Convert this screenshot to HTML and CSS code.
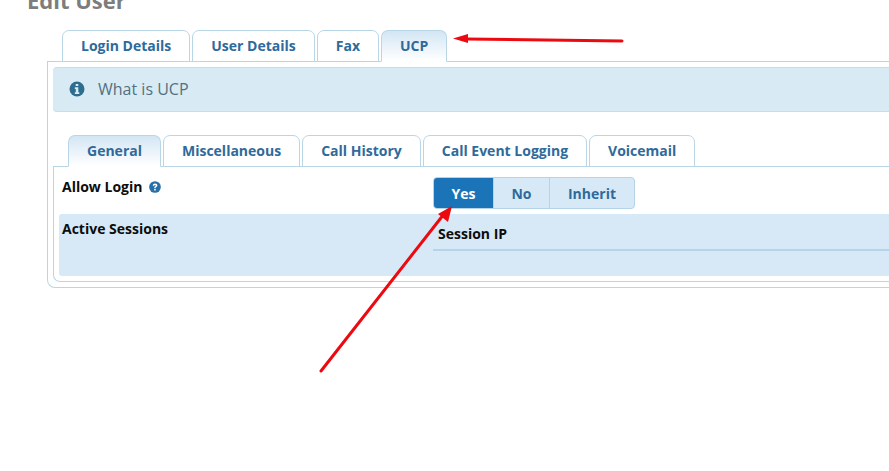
FILE: index.html
```html
<!DOCTYPE html>
<html lang="en">
<head>
<meta charset="utf-8">
<title>Edit User</title>
<link rel="stylesheet" href="styles.css">
</head>
<body>
<div class="page">
  <h1 class="title">Edit User</h1>
  <div class="outer">
    <ul class="tabs outer-tabs">
      <li class="tab">Login Details</li>
      <li class="tab">User Details</li>
      <li class="tab">Fax</li>
      <li class="tab active">UCP</li>
    </ul>
    <div class="panel outer-panel">
      <div class="alert">
        <svg class="icon-info" viewBox="0 0 16 16" aria-hidden="true"><circle cx="8" cy="8" r="7.5" fill="#2f6d8e"/><path d="M6.7 2.900h2.600v2.200H6.700zM5.800 6.200h3.500v5.100h1v1.800H5.800v-1.800h1V8h-1z" fill="#d8ebf5"/></svg>
        <span>What is UCP</span>
      </div>
      <ul class="tabs inner-tabs">
        <li class="tab active">General</li>
        <li class="tab">Miscellaneous</li>
        <li class="tab">Call History</li>
        <li class="tab">Call Event Logging</li>
        <li class="tab">Voicemail</li>
      </ul>
      <div class="panel inner-panel">
        <div class="row">
          <div class="label">Allow Login
            <svg class="icon-help" viewBox="0 0 16 16" aria-hidden="true"><circle cx="8" cy="8" r="7.800" fill="#2a6fa8"/><path d="M5 6.200c.1-1.900 1.300-2.900 3.100-2.900 1.800 0 3.100 1.100 3.100 2.500 0 1.300-.8 1.800-1.500 2.300-.5.300-.8.600-.8 1.100v.3H7v-.5c0-1 .5-1.500 1.200-2 .5-.3.800-.6.800-1 0-.5-.4-.8-1-.8-.7 0-1 .4-1.100 1zM6.900 10.700h2.100v2H6.900z" fill="#fff"/></svg>
          </div>
          <div class="toggle">
            <span class="opt on">Yes</span>
            <span class="opt">No</span>
            <span class="opt">Inherit</span>
          </div>
        </div>
        <div class="row band">
          <div class="label">Active Sessions</div>
          <div class="sessions"><div class="sessions-head">Session IP</div></div>
        </div>
      </div>
    </div>
  </div>
  <svg class="arrows" viewBox="0 0 889 471" aria-hidden="true">
    <path d="M622 41 L466 39" stroke="#ec0a10" stroke-width="3" stroke-linecap="round" fill="none"/>
    <path d="M453 38.500 L468 34 L468 43 Z" fill="#ec0a10"/>
    <path d="M321 371 L444 214" stroke="#ec0a10" stroke-width="3" stroke-linecap="round" fill="none"/>
    <path d="M452 206 L448 222 L438 214 Z" fill="#ec0a10"/>
  </svg>
</div>
</body>
</html>
```

FILE: styles.css
```css
* {
  box-sizing: border-box;
}

html,
body {
  margin: 0;
  padding: 0;
  background: #fff;
}

.page {
  position: relative;
  width: 889px;
  height: 471px;
  overflow: hidden;
  font-family: "Open Sans", "Noto Sans", sans-serif;
  font-size: 14px;
  color: #111;
}

.title {
  margin: -11px 0 0 27px;
  height: 41px;
  font-size: 22px;
  line-height: 22px;
  font-weight: 700;
  color: #7d7d7d;
}

.outer {
  margin-left: 47px;
  width: 900px;
}

.tabs {
  display: flex;
  list-style: none;
  margin: 0;
}

.outer-tabs {
  padding: 0 0 0 15px;
  gap: 2px;
}

.inner-tabs {
  padding: 0 0 0 15px;
  gap: 2px;
  margin-top: 23px;
}

.tab {
  height: 32px;
  margin-bottom: -1px;
  padding: 0 18px;
  line-height: 29px;
  font-weight: 700;
  color: #2f6a9b;
  background: #fff;
  border: 1px solid #b9d6e6;
  border-radius: 7px 7px 0 0;
  position: relative;
}

.tab.active {
  background: linear-gradient(#d3e6f4, #fff);
  border-bottom-color: #fff;
}

.panel {
  border: 1px solid #b9d6e6;
  border-right: 0;
}

.outer-panel {
  height: 227px;
  padding: 5px 0 0 5px;
  border-radius: 0 0 0 8px;
}

.alert {
  display: flex;
  align-items: center;
  gap: 13px;
  height: 45px;
  padding: 0 0 2px 16px;
  background: #d8ebf5;
  border-top: 1px solid #c3dfea;
  border-bottom: 1px solid #bfe0ec;
  border-radius: 4px 0 0 4px;
  font-size: 16px;
  color: #54707f;
}

.icon-info {
  width: 16px;
  height: 16px;
}

.inner-panel {
  height: 116px;
  padding-left: 5px;
  border-radius: 0 0 0 7px;
}

.row {
  display: grid;
  grid-template-columns: 374px 1fr;
}

.row:first-child {
  height: 47px;
  padding-top: 10px;
}

.band {
  height: 62px;
  background: #d7e9f7;
  border-radius: 3px 0 0 3px;
}

.label {
  padding-left: 3px;
  font-weight: 700;
  line-height: 20px;
  color: #0d0d0d;
}

.band .label {
  padding-top: 5px;
}

.icon-help {
  width: 12px;
  height: 12px;
  margin-left: 3px;
  vertical-align: -1px;
}

.toggle {
  display: flex;
  width: 202px;
  height: 32px;
  border: 1px solid #b5d4e8;
  border-radius: 4px;
  background: #d7e9f7;
  overflow: hidden;
}

.opt {
  display: flex;
  align-items: center;
  justify-content: center;
  font-weight: 700;
  color: #2f6a9b;
  border-left: 1px solid #b5d4e8;
  width: 56px;
}

.opt.on {
  width: 59px;
  border-left: 0;
  background: #1b74b7;
  color: #fff;
}

.opt:last-child {
  flex: 1;
}

.sessions-head {
  height: 37px;
  padding: 10px 0 0 5px;
  line-height: 20px;
  font-weight: 700;
  color: #0d0d0d;
  border-bottom: 2px solid #b3d4e9;
}

.arrows {
  position: absolute;
  inset: 0;
  width: 889px;
  height: 471px;
  pointer-events: none;
}
```
